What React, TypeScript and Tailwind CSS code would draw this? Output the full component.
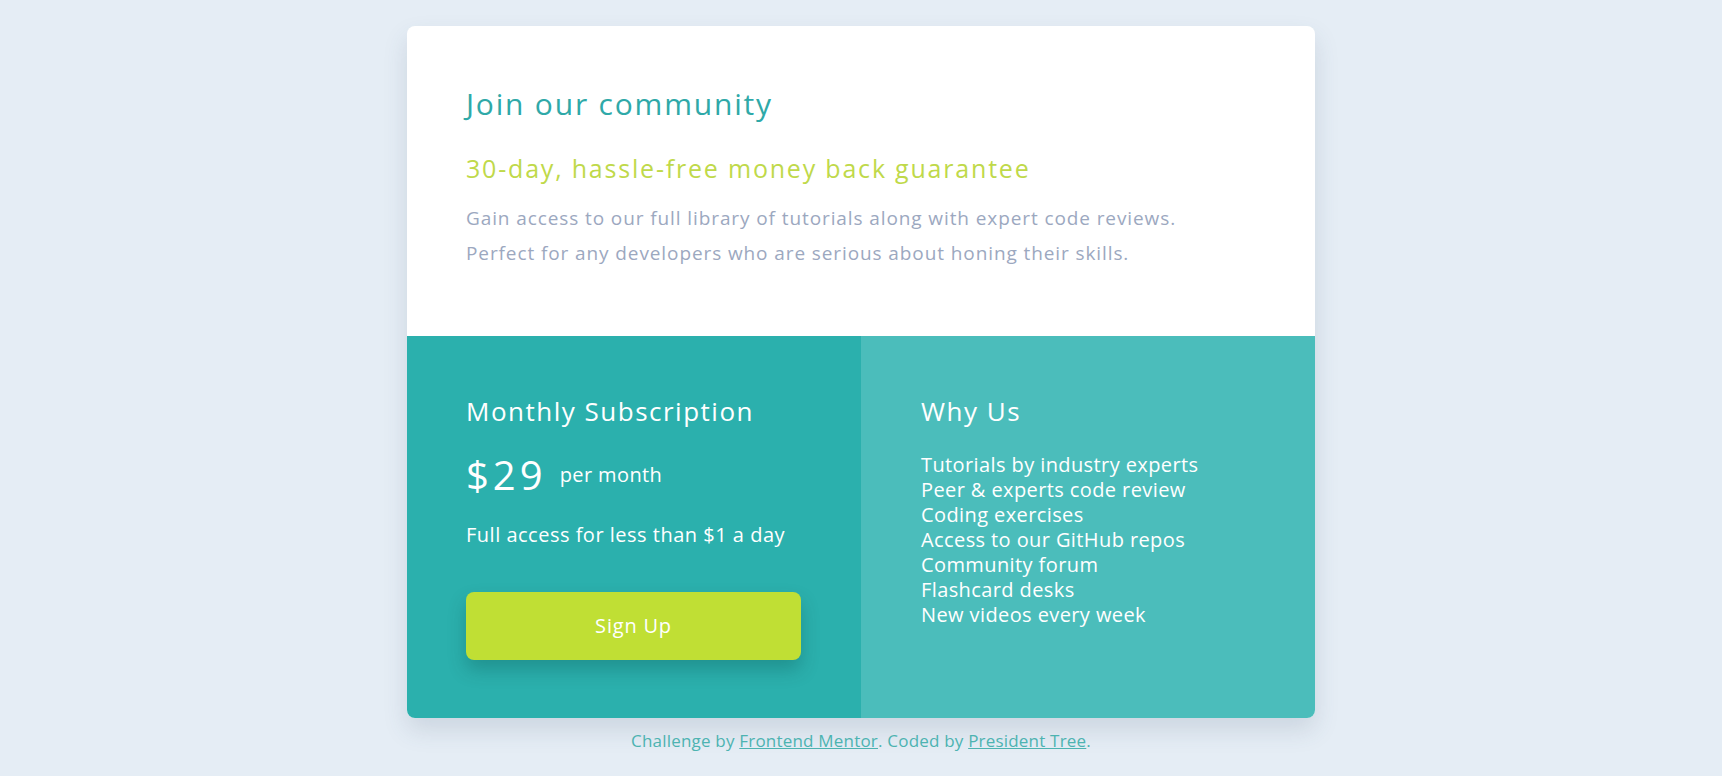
import React from "react";

const reasons = [
  "Tutorials by industry experts",
  "Peer & experts code review",
  "Coding exercises",
  "Access to our GitHub repos",
  "Community forum",
  "Flashcard desks",
  "New videos every week",
];

function App() {
  return (
    <main className="min-h-screen bg-[#e5edf5] flex flex-col items-center pt-[26px] font-['Open_Sans',sans-serif]">
      <div className="w-[908px] rounded-lg overflow-hidden bg-white shadow-[0_12px_24px_rgba(60,80,110,0.15)]">
        <section className="h-[310px] pt-[60px] px-[59px]">
          <h1 className="text-[30px] leading-[36px] tracking-[1.8px] text-[#2fa9a8]">
            Join our community
          </h1>
          <h2 className="mt-[32px] text-[25px] leading-[29px] tracking-[1.8px] text-[#bfd94a]">
            30-day, hassle-free money back guarantee
          </h2>
          <p className="mt-[18px] text-[19px] leading-[35px] tracking-[0.9px] text-[#9ca8bf]">
            Gain access to our full library of tutorials along with expert code reviews.
            <br />
            Perfect for any developers who are serious about honing their skills.
          </p>
        </section>
        <div className="grid grid-cols-2 h-[382px] text-white">
          <section className="bg-[#2bb0ad] pt-[59px] px-[59px]">
            <h3 className="text-[26px] leading-[32px] tracking-[1.5px]">Monthly Subscription</h3>
            <div className="mt-[24px] flex items-center gap-[13px]">
              <span className="text-[40px] leading-[48px] tracking-[4px]">$29</span>
              <span className="text-[20px] leading-[24px] tracking-[0.4px]">per month</span>
            </div>
            <p className="mt-[24px] text-[20px] leading-[24px] tracking-[0.5px]">
              Full access for less than $1 a day
            </p>
            <button className="mt-[45px] w-[335px] h-[68px] rounded-lg bg-[#c0df34] text-[20px] tracking-[0.8px] shadow-[0_10px_18px_rgba(0,60,60,0.25)]">
              Sign Up
            </button>
          </section>
          <section className="bg-[#4bbdbb] pt-[59px] px-[60px]">
            <h3 className="text-[26px] leading-[32px] tracking-[1.5px]">Why Us</h3>
            <ul className="mt-[25px] text-[20px] leading-[25px] tracking-[0.4px]">
              {reasons.map((r) => (
                <li key={r}>{r}</li>
              ))}
            </ul>
          </section>
        </div>
      </div>
      <footer className="mt-[11px] text-[17px] leading-[24px] tracking-[0.2px] text-[#4db3b1]">
        Challenge by{" "}
        <a href="#" className="underline">
          Frontend Mentor
        </a>
        . Coded by{" "}
        <a href="#" className="underline">
          President Tree
        </a>
        .
      </footer>
    </main>
  );
}

export default App;
